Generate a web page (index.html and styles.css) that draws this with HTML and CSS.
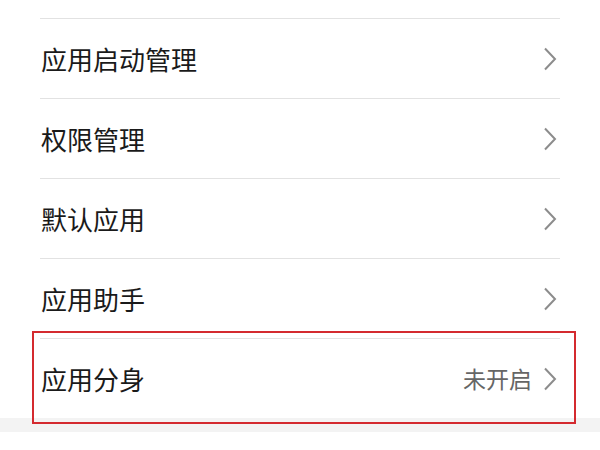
FILE: index.html
```html
<!DOCTYPE html>
<html lang="zh-CN">
<head>
<meta charset="utf-8">
<title>应用管理</title>
<link rel="stylesheet" href="styles.css">
</head>
<body>
<div class="page">
  <div class="list">
    <div class="row-partial"></div>
    <div class="row">
      <span class="label">应用启动管理</span>
      <span class="chev"><svg width="14" height="24" viewBox="0 0 14 24"><path d="M2 1.5 L12 12 L2 22.5" fill="none" stroke="#8c8c8c" stroke-width="2"/></svg></span>
    </div>
    <div class="row">
      <span class="label">权限管理</span>
      <span class="chev"><svg width="14" height="24" viewBox="0 0 14 24"><path d="M2 1.5 L12 12 L2 22.5" fill="none" stroke="#8c8c8c" stroke-width="2"/></svg></span>
    </div>
    <div class="row">
      <span class="label">默认应用</span>
      <span class="chev"><svg width="14" height="24" viewBox="0 0 14 24"><path d="M2 1.5 L12 12 L2 22.5" fill="none" stroke="#8c8c8c" stroke-width="2"/></svg></span>
    </div>
    <div class="row">
      <span class="label">应用助手</span>
      <span class="chev"><svg width="14" height="24" viewBox="0 0 14 24"><path d="M2 1.5 L12 12 L2 22.5" fill="none" stroke="#8c8c8c" stroke-width="2"/></svg></span>
    </div>
    <div class="row row-highlight">
      <span class="label">应用分身</span>
      <span class="value">未开启</span>
      <span class="chev"><svg width="14" height="24" viewBox="0 0 14 24"><path d="M2 1.5 L12 12 L2 22.5" fill="none" stroke="#8c8c8c" stroke-width="2"/></svg></span>
      <span class="highlight-box"></span>
    </div>
  </div>
  <div class="band"></div>
</div>
</body>
</html>
```

FILE: styles.css
```css
html, body {
  margin: 0;
  padding: 0;
  background: #ffffff;
}
body {
  font-family: "Noto Sans CJK SC", "Noto Sans", sans-serif;
  color: #1a1a1a;
}
.page {
  width: 600px;
  height: 450px;
  overflow: hidden;
  background: #ffffff;
}
.list {
  padding: 0 40px;
}
.row-partial {
  height: 18px;
}
.row {
  position: relative;
  height: 79px;
  border-top: 1px solid #e2e2e2;
  display: flex;
  align-items: center;
}
.label {
  flex: 1;
  font-size: 26px;
  line-height: 1;
  color: #1a1a1a;
  margin-left: 1px;
}
.value {
  font-size: 23px;
  line-height: 1;
  color: #666666;
  margin-right: 11px;
}
.chev {
  display: flex;
  width: 14px;
  height: 24px;
  margin-right: 3px;
}
.highlight-box {
  position: absolute;
  left: -8px;
  top: -8px;
  right: -16px;
  bottom: -6px;
  border: 2px solid #d42a2f;
  pointer-events: none;
}
.band {
  height: 14px;
  background: #f3f3f3;
}
```
